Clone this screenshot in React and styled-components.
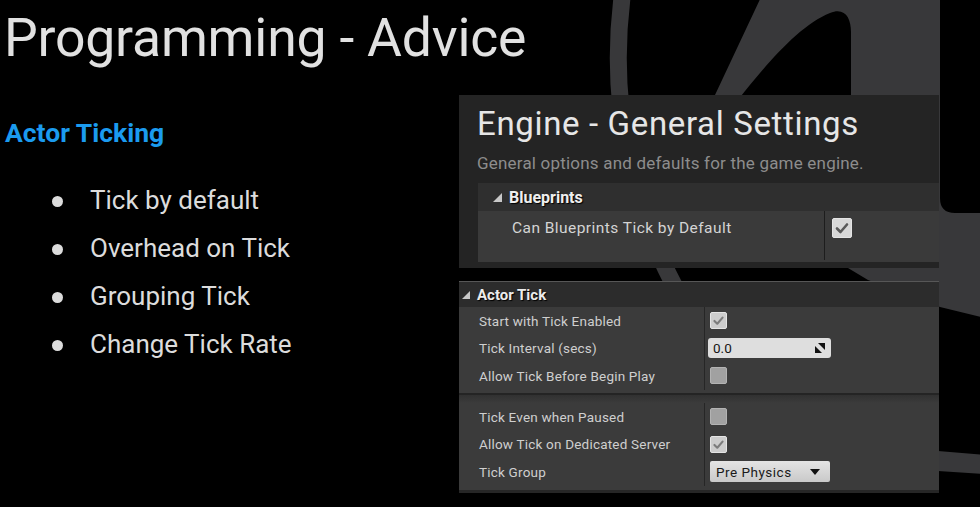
import React from "react";
import styled, { createGlobalStyle } from "styled-components";

const GlobalStyle = createGlobalStyle`
  *, *::before, *::after { box-sizing: border-box; }
  html, body { margin: 0; padding: 0; background: #000; }
  body { font-family: Roboto, "Liberation Sans", sans-serif; }
`;

const Stage = styled.div`
  position: relative;
  width: 980px;
  height: 507px;
  overflow: hidden;
  background: #000;
  display: flex;
`;

const Backdrop = styled.svg`
  position: absolute;
  left: 0;
  top: 0;
  width: 980px;
  height: 507px;
`;

const LeftCol = styled.section`
  position: relative;
  width: 459px;
  flex: none;
  padding: 6px 0 0 5px;
`;

const Title = styled.h1`
  margin: 0 0 0 -1px;
  font-size: 53.5px;
  font-weight: 400;
  line-height: 64px;
  letter-spacing: -0.2px;
  white-space: nowrap;
  color: #e1e1e1;
`;

const Heading = styled.h2`
  margin: 47px 0 0;
  font-size: 26.5px;
  font-weight: 700;
  line-height: 32px;
  color: #1b9bef;
`;

const List = styled.ul`
  list-style: none;
  margin: 27px 0 0;
  padding: 0 0 0 47px;
`;

const Item = styled.li`
  display: flex;
  align-items: center;
  gap: 27px;
  height: 48px;
  line-height: 48px;
  font-size: 26px;
  color: #dcdcdc;
  &::before {
    content: "";
    flex: none;
    width: 11px;
    height: 11px;
    margin-top: 3px;
    border-radius: 50%;
    background: #dcdcdc;
  }
`;

const RightCol = styled.section`
  position: relative;
  flex: none;
  width: 480px;
  padding-top: 95px;
  display: flex;
  flex-direction: column;
  gap: 13px;
`;

const SettingsPanel = styled.div`
  height: 173px;
  background: #242424;
  padding-left: 19px;
  display: flex;
  flex-direction: column;
`;

const PanelTitle = styled.div`
  margin: 9px 0 0 -1px;
  font-size: 33px;
  line-height: 40px;
  letter-spacing: 0.65px;
  color: #e6e6e6;
  white-space: nowrap;
`;

const PanelSub = styled.div`
  margin: 9px 0 0 -1px;
  font-size: 17px;
  line-height: 20px;
  letter-spacing: 0.2px;
  color: #8d8d8d;
  white-space: nowrap;
`;

const Category = styled.div`
  margin-top: 10px;
  height: 28px;
  flex: none;
  background: #2f2f2f;
  display: flex;
  align-items: center;
  gap: 7px;
  padding-left: 15px;
  font-size: 16px;
  font-weight: 700;
  color: #efefef;
  text-shadow: 1px 1px 1px #000;
`;

const BigRow = styled.div`
  display: flex;
  height: 51px;
  flex: none;
  background: #3a3a3a;
`;

const BigLabel = styled.div`
  width: 347px;
  margin-bottom: 2px;
  border-right: 1px solid #1d1d1d;
  padding: 8px 0 0 34px;
  font-size: 15.5px;
  line-height: 18px;
  letter-spacing: 0.45px;
  color: #d4d4d4;
`;

const BigValue = styled.div`
  padding: 7px 0 0 7px;
`;

const DetailsPanel = styled.div`
  height: 212px;
  background: #3b3b3b;
  border-top: 1px solid #575757;
  border-bottom: 3px solid #262626;
  display: flex;
  flex-direction: column;
`;

const DetailsHeader = styled.div`
  height: 25px;
  flex: none;
  background: #2c2c2c;
  display: flex;
  align-items: center;
  gap: 7px;
  padding-left: 3px;
  font-size: 15px;
  font-weight: 700;
  color: #ececec;
  text-shadow: 1px 1px 1px #000;
`;

const Group = styled.div`
  display: flex;
  flex-direction: column;
`;

const Row = styled.div`
  display: flex;
  height: 27.5px;
`;

const Label = styled.div`
  width: 246px;
  border-right: 1px solid #262626;
  display: flex;
  align-items: center;
  padding-left: 20px;
  font-size: 13.5px;
  letter-spacing: 0.2px;
  color: #cfcfcf;
  white-space: nowrap;
`;

const Value = styled.div`
  display: flex;
  align-items: center;
  padding-left: 5px;
`;

const Separator = styled.div`
  height: 13.5px;
  flex: none;
  background: linear-gradient(
    to bottom,
    #3b3b3b 0,
    #3b3b3b 2.5px,
    #242424 2.5px,
    #242424 4.5px,
    #303030 4.5px,
    #3b3b3b 100%
  );
`;

const Box = styled.span`
  display: inline-flex;
  align-items: center;
  justify-content: center;
  width: ${(p) => p.$size}px;
  height: ${(p) => p.$size}px;
  border-radius: 2px;
  background: ${(p) => (p.$checked ? (p.$light ? "#d8d8d8" : "#cccccc") : "#a1a1a1")};
  border: 1px solid ${(p) => (p.$checked ? "#e4e4e4" : "#b3b3b3")};
`;

const SpinBox = styled.div`
  margin-left: -2px;
  width: 123px;
  height: 20px;
  border-radius: 3px;
  background: #dedede;
  display: flex;
  align-items: center;
  justify-content: space-between;
  padding: 0 6px 0 5px;
  font-size: 13.5px;
  color: #151515;
`;

const Dropdown = styled.div`
  width: 120px;
  height: 21px;
  border-radius: 2px;
  background: linear-gradient(to bottom, #e4e4e4, #c9c9c9);
  display: flex;
  align-items: center;
  justify-content: space-between;
  padding: 0 10px 0 6px;
  font-size: 13.5px;
  letter-spacing: 0.5px;
  color: #1a1a1a;
`;

const Arrow = ({ size = 8, color = "#c8c8c8" }) => (
  <svg width={size} height={size} viewBox="0 0 8 8">
    <polygon points="8,0 8,8 0,8" fill={color} />
  </svg>
);

const Checkbox = ({ checked, size = 17, light }) => (
  <Box $checked={checked} $size={size} $light={light}>
    {checked && (
      <svg width={size - 4} height={size - 4} viewBox="0 0 16 16">
        <path
          d="M3 8.5 L6.5 12 L13 4.5"
          fill="none"
          stroke={light ? "#5a5a5a" : "#7c7c7c"}
          strokeWidth="2.6"
          strokeLinecap="round"
          strokeLinejoin="round"
        />
      </svg>
    )}
  </Box>
);

const SpinIcon = () => (
  <svg width="10" height="10" viewBox="0 0 10 10">
    <polygon points="3,0 10,0 10,7" fill="#111" />
    <polygon points="0,3 0,10 7,10" fill="#111" />
  </svg>
);

const groupA = [
  { label: "Start with Tick Enabled", value: "check" },
  { label: "Tick Interval (secs)", value: "spin" },
  { label: "Allow Tick Before Begin Play", value: "empty" },
];

const groupB = [
  { label: "Tick Even when Paused", value: "empty" },
  { label: "Allow Tick on Dedicated Server", value: "check" },
  { label: "Tick Group", value: "drop" },
];

const renderValue = (v) => {
  if (v === "check") return <Checkbox checked />;
  if (v === "empty") return <Checkbox />;
  if (v === "spin")
    return (
      <SpinBox>
        <span>0.0</span>
        <SpinIcon />
      </SpinBox>
    );
  return (
    <Dropdown>
      <span>Pre Physics</span>
      <svg width="10" height="6" viewBox="0 0 10 6">
        <polygon points="0,0 10,0 5,6" fill="#111" />
      </svg>
    </Dropdown>
  );
};

const bullets = ["Tick by default", "Overhead on Tick", "Grouping Tick", "Change Tick Rate"];

export default function App() {
  return (
    <>
      <GlobalStyle />
      <Stage>
        <Backdrop viewBox="0 0 980 507">
          <path
            d="M 623 -10 A 492 492 0 0 0 694 320"
            fill="none"
            stroke="#38383a"
            strokeWidth="17"
          />
          <path
            fillRule="evenodd"
            fill="#38383a"
            d="M 762 -5 L 940 -5 L 940 198 Q 940 213 955 213 L 985 213 L 985 318 L 940 307 L 868 280 L 848 268 L 800 230 L 690 140 L 715 95 Z
               M 738 100 C 768 62 800 25 830 13 C 845 7 851 18 851 32 L 851 210 L 738 210 Z"
          />
          <path d="M 938 451 L 985 455 L 985 474 L 938 471 Z" fill="#38383a" />
        </Backdrop>

        <LeftCol>
          <Title>Programming - Advice</Title>
          <Heading>Actor Ticking</Heading>
          <List>
            {bullets.map((b) => (
              <Item key={b}>{b}</Item>
            ))}
          </List>
        </LeftCol>

        <RightCol>
          <SettingsPanel>
            <PanelTitle>Engine - General Settings</PanelTitle>
            <PanelSub>General options and defaults for the game engine.</PanelSub>
            <Category>
              <Arrow size={9} />
              <span>Blueprints</span>
            </Category>
            <BigRow>
              <BigLabel>Can Blueprints Tick by Default</BigLabel>
              <BigValue>
                <Checkbox checked size={20} light />
              </BigValue>
            </BigRow>
          </SettingsPanel>

          <DetailsPanel>
            <DetailsHeader>
              <Arrow size={8} />
              <span>Actor Tick</span>
            </DetailsHeader>
            <Group>
              {groupA.map((r) => (
                <Row key={r.label}>
                  <Label>{r.label}</Label>
                  <Value>{renderValue(r.value)}</Value>
                </Row>
              ))}
            </Group>
            <Separator />
            <Group>
              {groupB.map((r) => (
                <Row key={r.label}>
                  <Label>{r.label}</Label>
                  <Value>{renderValue(r.value)}</Value>
                </Row>
              ))}
            </Group>
          </DetailsPanel>
        </RightCol>
      </Stage>
    </>
  );
}
